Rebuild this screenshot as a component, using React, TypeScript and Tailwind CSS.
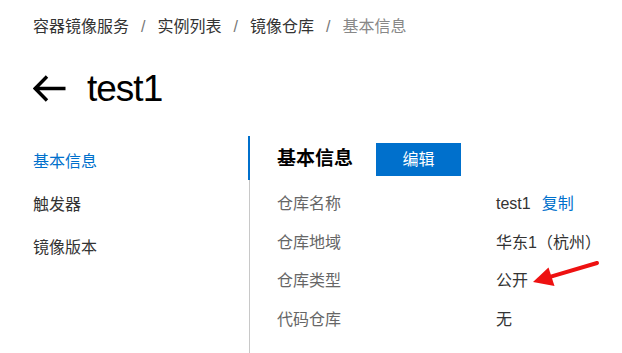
import React from "react";

const font = '"Liberation Sans", "Noto Sans CJK SC", sans-serif';

export default function App() {
  const rows: { label: string; value: React.ReactNode }[] = [
    {
      label: "仓库名称",
      value: (
        <span className="flex items-center">
          <span>test1</span>
          <span className="ml-[11px] text-[#0070cc]">复制</span>
        </span>
      ),
    },
    { label: "仓库地域", value: "华东1（杭州）" },
    { label: "仓库类型", value: "公开" },
    { label: "代码仓库", value: "无" },
  ];
  return (
    <div className="relative w-[622px] h-[353px] overflow-hidden bg-white" style={{ fontFamily: font }}>
      <div className="pl-[33px]">
        <div className="flex items-center h-[22px] mt-[16px] text-[16px] text-[#333]">
          <span>容器镜像服务</span>
          <span className="mx-[12px] text-[#777]">/</span>
          <span>实例列表</span>
          <span className="mx-[12px] text-[#777]">/</span>
          <span>镜像仓库</span>
          <span className="mx-[12px] text-[#777]">/</span>
          <span className="text-[#888]">基本信息</span>
        </div>
        <div className="flex items-center h-[40px] mt-[30px]">
          <svg width="33" height="27" viewBox="0 0 33 27" className="shrink-0">
            <path d="M32.5 13.5H2.5M14 1.5L2.2 13.5L14 25.5" stroke="#000" strokeWidth="3.4" fill="none" />
          </svg>
          <span className="ml-[21px] text-[37px] leading-none text-black tracking-[-1px]">test1</span>
        </div>
      </div>
      <div className="flex mt-[28px] pl-[27px]">
        <div className="w-[222px] pt-[4px] text-[16px] text-[#333]">
          <div className="h-[43px] flex items-center pl-[6px] text-[#0070cc]">基本信息</div>
          <div className="h-[43px] flex items-center pl-[6px]">触发器</div>
          <div className="h-[43px] flex items-center pl-[6px]">镜像版本</div>
        </div>
        <div className="relative w-px h-[217px] bg-[#c8c8c8]">
          <div className="absolute left-[-1px] top-0 w-[2px] h-[44px] bg-[#0070cc]" />
        </div>
        <div className="pl-[27px] pt-[7px] flex-1">
          <div className="flex items-center h-[33px]">
            <span className="text-[19px] font-bold text-black w-[99px]">基本信息</span>
            <button className="w-[85px] h-[33px] bg-[#0070cc] text-white text-[16px] flex items-center justify-center">编辑</button>
          </div>
          <div className="mt-[9px]">
            {rows.map((r) => (
              <div key={r.label} className="flex items-center h-[38.5px] text-[16px]">
                <span className="w-[219px] text-[#666]">{r.label}</span>
                <span className="text-[#333]">{r.value}</span>
              </div>
            ))}
          </div>
        </div>
      </div>
      <svg className="absolute left-[530px] top-[258px]" width="72" height="32" viewBox="0 0 72 32">
        <line x1="20" y1="18.8" x2="67" y2="5" stroke="#ee1111" strokeWidth="4" strokeLinecap="round" />
        <polygon points="3,24 24.5,28 18.5,9.5" fill="#ee1111" />
      </svg>
    </div>
  );
}
